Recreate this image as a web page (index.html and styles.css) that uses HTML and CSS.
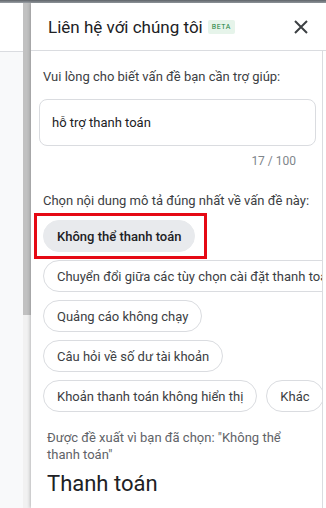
FILE: index.html
```html
<!DOCTYPE html>
<html lang="vi">
<head>
    <meta charset="UTF-8">
    <meta name="viewport" content="width=device-width, initial-scale=1.0">
    <title>Liên hệ với chúng tôi</title>
    <link rel="stylesheet" href="styles.css">
</head>
<body>
    <div class="top-shade"></div>
    <div class="page">
        <!-- Background page behind the panel -->
        <div class="back-page">
            <div class="back-header"></div>
        </div>
        <div class="back-scroll">
            <div class="back-thumb"></div>
        </div>

        <!-- Contact panel -->
        <div class="panel">
            <div class="panel-header">
                <span class="panel-title">Liên hệ với chúng tôi</span>
                <span class="beta">BETA</span>
                <button class="close-btn" aria-label="Đóng">
                    <svg width="14" height="14" viewBox="0 0 14 14">
                        <path d="M1 1 L13 13 M13 1 L1 13" stroke="#3c4043" stroke-width="2" fill="none"/>
                    </svg>
                </button>
            </div>

            <div class="panel-body">
                <p class="question">Vui lòng cho biết vấn đề bạn cần trợ giúp:</p>
                <div class="text-box">hỗ trợ thanh toán</div>
                <div class="counter">17 / 100</div>

                <p class="question choose">Chọn nội dung mô tả đúng nhất về vấn đề này:</p>
                <div class="chips">
                    <div class="chip-row">
                        <span class="chip selected">Không thể thanh toán</span>
                        <div class="highlight"></div>
                    </div>
                    <div class="chip-row">
                        <span class="chip">Chuyển đổi giữa các tùy chọn cài đặt thanh toán</span>
                    </div>
                    <div class="chip-row">
                        <span class="chip">Quảng cáo không chạy</span>
                    </div>
                    <div class="chip-row">
                        <span class="chip">Câu hỏi về số dư tài khoản</span>
                    </div>
                    <div class="chip-row">
                        <span class="chip">Khoản thanh toán không hiển thị</span>
                        <span class="chip">Khác</span>
                    </div>
                </div>

                <p class="suggest">Được đề xuất vì bạn đã chọn: "Không thể thanh toán"</p>
                <h2 class="topic">Thanh toán</h2>
            </div>
        </div>
    </div>
</body>
</html>
```

FILE: styles.css
```css
* {
    margin: 0;
    padding: 0;
    box-sizing: border-box;
    font-family: Roboto, "Noto Sans", Arial, sans-serif;
}

body {
    width: 326px;
    height: 508px;
    overflow: hidden;
    background-color: #ffffff;
}

.top-shade {
    height: 3px;
    background: linear-gradient(#5f6368, #9aa0a6);
}

.page {
    display: flex;
    height: 505px;
}

.back-page {
    width: 23px;
    background-color: #f8f9fa;
}

.back-header {
    height: 49px;
    background-color: #ffffff;
    border-bottom: 1px solid #dadce0;
}

.back-scroll {
    width: 8px;
    background-color: #f1f1f1;
}

.back-thumb {
    height: 312px;
    background-color: #c1c1c1;
}

.panel {
    flex: 1;
    display: flex;
    flex-direction: column;
    background-color: #ffffff;
    box-shadow: -1px 0 3px rgba(60, 64, 67, 0.3);
    min-width: 0;
}

.panel-header {
    height: 48px;
    display: flex;
    align-items: center;
    padding: 0 18px 0 17px;
    border-bottom: 1px solid #dadce0;
}

.panel-title {
    font-size: 17px;
    color: #202124;
    white-space: nowrap;
}

.beta {
    margin-left: 5px;
    background-color: #e6f4ea;
    color: #188038;
    font-size: 7px;
    letter-spacing: 0.6px;
    padding: 3px 4px;
    border-radius: 2px;
}

.close-btn {
    margin-left: auto;
    border: none;
    background: none;
    display: flex;
}

.panel-body {
    flex: 1;
    margin-right: 3px;
    border-right: 1px solid #dadce0;
    padding: 16px 6px 0 8px;
    overflow: hidden;
}

.question {
    font-size: 13px;
    line-height: 20px;
    color: #3c4043;
    padding-left: 4px;
    white-space: nowrap;
}

.text-box {
    margin-top: 12px;
    height: 47px;
    border: 1px solid #dadce0;
    border-radius: 8px;
    padding: 0 12px;
    display: flex;
    align-items: center;
    font-size: 13px;
    color: #202124;
}

.counter {
    text-align: right;
    padding-right: 20px;
    margin-top: 7px;
    font-size: 12px;
    line-height: 16px;
    color: #80868b;
}

.choose {
    margin-top: 22px;
}

.chips {
    margin-top: 9px;
    padding-left: 4px;
    display: flex;
    flex-direction: column;
    gap: 8px;
}

.chip-row {
    position: relative;
    display: flex;
    gap: 9px;
}

.chip {
    height: 32px;
    display: inline-flex;
    align-items: center;
    padding: 0 13px;
    border: 1px solid #dadce0;
    border-radius: 16px;
    font-size: 13px;
    color: #3c4043;
    white-space: nowrap;
    flex-shrink: 0;
}

.chip.selected {
    background-color: #e8eaed;
    border-color: #e8eaed;
    color: #202124;
    font-weight: 500;
}

.highlight {
    position: absolute;
    left: -9px;
    top: -7px;
    width: 173px;
    height: 46px;
    border: 3px solid #e50914;
}

.suggest {
    margin-top: 17px;
    padding-left: 8px;
    padding-right: 24px;
    font-size: 13px;
    line-height: 17px;
    color: #5f6368;
}

.topic {
    margin-top: 7px;
    padding-left: 8px;
    font-size: 22px;
    font-weight: 400;
    line-height: 28px;
    color: #202124;
}
```
